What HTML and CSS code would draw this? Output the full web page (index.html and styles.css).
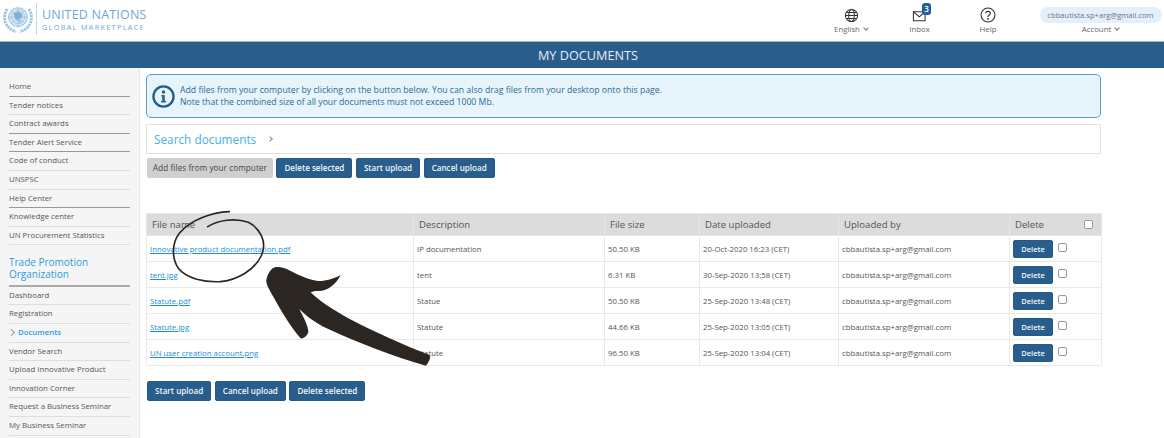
FILE: index.html
```html
<!DOCTYPE html>
<html lang="en">
<head>
<meta charset="utf-8">
<title>My Documents</title>
<link rel="stylesheet" href="styles.css">
</head>
<body>
<header class="top">
  <div class="brand">
    <svg class="emblem" viewBox="0 0 32 32" aria-hidden="true">
      <circle cx="16" cy="14" r="10" fill="#d5e6f5" stroke="#8fbbe0" stroke-width="1"/>
      <g fill="none" stroke="#8fbbe0" stroke-width=".7">
        <circle cx="16" cy="14" r="7"/><circle cx="16" cy="14" r="3.500"/>
        <path d="M6 14h20M16 4v20M9 7l14 14M23 7 9 21"/>
      </g>
      <path d="M11 10l5-2 4 2 1 4-3 1-2 3-3-3zM17 17l2 1-1 3z" fill="#7fb0da"/>
      <g fill="none" stroke="#9cc5e6" stroke-width="3" stroke-dasharray="2.500 .8">
        <path d="M4.500 5.500C-1.500 14 2 26 14 29.500"/><path d="M27.500 5.500c6 8.500 2.500 20.500-9.500 24"/>
      </g>
    </svg>
    <div class="brand-rule"></div>
    <div class="brand-text">
      <div class="brand-un">UNITED NATIONS</div>
      <div class="brand-gm">GLOBAL MARKETPLACE</div>
    </div>
  </div>
  <nav class="tools">
    <div class="tool tool-lang">
      <svg class="ico" viewBox="0 0 16 16" aria-hidden="true"><g fill="none" stroke="#333" stroke-width="1.100"><circle cx="8" cy="8" r="6.500"/><ellipse cx="8" cy="8" rx="3" ry="6.500"/><path d="M1.500 8h13M2.500 4.800h11M2.500 11.200h11"/></g></svg>
      <span>English <i class="chev"></i></span>
    </div>
    <div class="tool tool-inbox">
      <span class="mail">
        <svg class="ico ico-mail" viewBox="0 0 16 14" aria-hidden="true"><g fill="none" stroke="#333" stroke-width="1.100"><path d="M1.500 3h12.500v9.500H1.500z"/><path d="M1.500 3 7.800 8.500 14 3"/></g></svg>
        <b class="badge">3</b>
      </span>
      <span>Inbox</span>
    </div>
    <div class="tool tool-help">
      <svg class="ico ico-help" viewBox="0 0 16 16" aria-hidden="true"><circle cx="8" cy="8" r="7" fill="none" stroke="#333" stroke-width="1.100"/><path d="M5.800 6.300C5.800 3.600 10.300 3.700 10.300 6.300 10.300 8 8 8 8 10" fill="none" stroke="#333" stroke-width="1.200"/><circle cx="8" cy="12" r=".9" fill="#333"/></svg>
      <span>Help</span>
    </div>
    <div class="tool tool-account">
      <span class="pill">cbbautista.sp+arg@gmail.com</span>
      <span>Account <i class="chev"></i></span>
    </div>
  </nav>
</header>
<div class="title-bar">MY DOCUMENTS</div>
<div class="page">
  <aside class="side">
    <ul class="menu">
      <li class="heavy">Home</li>
      <li>Tender notices</li>
      <li class="heavy">Contract awards</li>
      <li class="heavy">Tender Alert Service</li>
      <li>Code of conduct</li>
      <li>UNSPSC</li>
      <li class="heavy">Help Center</li>
      <li>Knowledge center</li>
      <li>UN Procurement Statistics</li>
    </ul>
    <h2 class="org">Trade Promotion Organization</h2>
    <ul class="menu">
      <li>Dashboard</li>
      <li>Registration</li>
      <li class="current">Documents</li>
      <li>Vendor Search</li>
      <li>Upload Innovative Product</li>
      <li>Innovation Corner</li>
      <li>Request a Business Seminar</li>
      <li>My Business Seminar</li>
    </ul>
  </aside>
  <main class="content">
    <div class="notice">
      <svg class="info" viewBox="0 0 24 24" aria-hidden="true"><circle cx="12" cy="12" r="10.500" fill="none" stroke="#1f5f8f" stroke-width="2.400"/><circle cx="12" cy="7.300" r="1.800" fill="#1f5f8f"/><path d="M9.800 10.500h3.500v6.200h1.300v1.500H9.500v-1.500h1.200v-4.700h-.9z" fill="#1f5f8f"/></svg>
      <p>Add files from your computer by clicking on the button below. You can also drag files from your desktop onto this page.<br>Note that the combined size of all your documents must not exceed 1000 Mb.</p>
    </div>
    <div class="search"><span>Search documents</span><i class="chev-r"></i></div>
    <div class="actions">
      <button class="btn btn-grey">Add files from your computer</button>
      <button class="btn">Delete selected</button>
      <button class="btn">Start upload</button>
      <button class="btn">Cancel upload</button>
    </div>
    <table class="docs">
      <colgroup><col class="c1"><col class="c2"><col class="c3"><col class="c4"><col class="c5"><col class="c6"></colgroup>
      <thead>
        <tr><th>File name</th><th>Description</th><th>File size</th><th>Date uploaded</th><th>Uploaded by</th><th><div class="del-head">Delete<i class="box"></i></div></th></tr>
      </thead>
      <tbody>
        <tr><td><a href="#">Innovative product documentation.pdf</a></td><td>IP documentation</td><td>50.50 KB</td><td>20-Oct-2020 16:23 (CET)</td><td>cbbautista.sp+arg@gmail.com</td><td><div class="del-cell"><button class="btn btn-sm">Delete</button><i class="box"></i></div></td></tr>
        <tr><td><a href="#">tent.jpg</a></td><td>tent</td><td>6.31 KB</td><td>30-Sep-2020 13:58 (CET)</td><td>cbbautista.sp+arg@gmail.com</td><td><div class="del-cell"><button class="btn btn-sm">Delete</button><i class="box"></i></div></td></tr>
        <tr><td><a href="#">Statute.pdf</a></td><td>Statue</td><td>50.50 KB</td><td>25-Sep-2020 13:48 (CET)</td><td>cbbautista.sp+arg@gmail.com</td><td><div class="del-cell"><button class="btn btn-sm">Delete</button><i class="box"></i></div></td></tr>
        <tr><td><a href="#">Statute.jpg</a></td><td>Statute</td><td>44.66 KB</td><td>25-Sep-2020 13:05 (CET)</td><td>cbbautista.sp+arg@gmail.com</td><td><div class="del-cell"><button class="btn btn-sm">Delete</button><i class="box"></i></div></td></tr>
        <tr><td><a href="#">UN user creation account.png</a></td><td>Statute</td><td>96.50 KB</td><td>25-Sep-2020 13:04 (CET)</td><td>cbbautista.sp+arg@gmail.com</td><td><div class="del-cell"><button class="btn btn-sm">Delete</button><i class="box"></i></div></td></tr>
      </tbody>
    </table>
    <div class="actions actions-bottom">
      <button class="btn">Start upload</button>
      <button class="btn">Cancel upload</button>
      <button class="btn">Delete selected</button>
    </div>
  </main>
</div>
<svg class="scribble" viewBox="0 0 960 510" aria-hidden="true">
  <path d="M268 20C215 22 150 45 118 85 95 115 95 160 115 190 140 222 195 232 240 230 290 226 345 195 365 150 382 110 360 70 325 52 285 38 235 45 203 65" fill="none" stroke="#2b2622" stroke-width="5" stroke-linecap="round"/>
  <path d="M398 190C412 182 432 188 452 198 480 213 510 225 535 228 560 228 585 220 602 210 590 235 565 258 535 258 525 258 518 259 512 262 535 285 575 312 625 340 705 382 790 420 868 450 874 458 866 472 858 482 760 455 650 412 560 370 530 355 500 335 478 312 490 335 503 360 505 378 505 390 492 402 482 400 455 370 425 320 400 275 388 255 378 238 379 225 382 210 388 198 398 190Z" fill="#2b2622"/>
</svg>
</body>
</html>
```
FILE: styles.css
```css
* { box-sizing: border-box; }
html, body { margin: 0; height: 438px; overflow: hidden; background: #fff; }
body { font-family: "Open Sans", "Liberation Sans", sans-serif; color: #555; position: relative; }

.top { height: 41px; display: flex; justify-content: space-between; }
.brand { display: flex; align-items: flex-start; padding: 3px 0 0 3px; }
.emblem { width: 30px; height: 32px; }
.brand-rule { width: 1px; height: 32px; background: #bcd6ec; margin: 0 5px 0 3px; }
.brand-text { padding-top: 5px; color: #6da7d8; }
.brand-un { font-size: 12.500px; line-height: 14px; letter-spacing: .2px; }
.brand-gm { font-size: 7.300px; line-height: 10px; letter-spacing: 1.300px; }

.tools { display: flex; font-size: 7.800px; color: #666; }
.tool { position: relative; display: flex; flex-direction: column; align-items: center; }
.tool-lang { width: 50px; margin-right: 18.500px; padding-top: 8px; }
.tool-inbox { width: 50px; margin-right: 18.500px; padding-top: 8px; }
.tool-help { width: 50px; margin-right: 30px; padding-top: 7px; }
.tool-account { width: 115px; margin-right: 6px; padding-top: 7px; }
.ico { width: 15px; height: 15px; display: block; }
.ico-help { width: 16px; height: 16px; }
.tool > span:last-child { line-height: 12px; white-space: nowrap; }
.mail { position: relative; display: block; }
.badge { position: absolute; left: 10px; top: -5px; width: 9px; height: 12px; border-radius: 3px; background: #1f5f9a; color: #fff; font-size: 8px; line-height: 12px; text-align: center; font-weight: 600; }
.pill { width: 122px; flex: none; height: 16px; line-height: 16px; text-align: center; background: #e3f0fb; border-radius: 8px; font-size: 7.600px; color: #6a757f; }
.chev { display: inline-block; width: 4px; height: 4px; border-right: 1px solid #777; border-bottom: 1px solid #777; transform: rotate(45deg); margin: 0 0 2px 2px; }

.title-bar { height: 27px; padding-left: 12px; background: #295d8b; border-top: 1px solid #9db4c8; color: #e6eef5; font-size: 12.700px; line-height: 27px; text-align: center; }

.page { display: flex; height: 370px; }
.side { width: 140px; flex: none; background: #f5f5f5; border-right: 1px solid #e9e9e9; padding: 10px 9px 0 9px; }
.menu { list-style: none; margin: 0; padding: 0; font-size: 7.800px; color: #555; }
.menu li { height: 18.600px; line-height: 17px; border-bottom: 1px solid #ddd; white-space: nowrap; }
.menu li.heavy { border-bottom: 1.500px solid #999; }
.menu li.current { color: #2f9bdc; font-weight: 600; padding-left: 9px; position: relative; }
.menu li.current::before { content: ""; position: absolute; left: 0; top: 6px; width: 4px; height: 4px; border-right: 1px solid #999; border-top: 1px solid #999; transform: rotate(45deg); }
.org { margin: 11px 0 0; padding-bottom: 4.500px; font-size: 10px; line-height: 12px; font-weight: 400; color: #2f9bdc; border-bottom: 2px solid #aaa; }

.content { flex: none; width: 955px; margin-left: 6px; padding-top: 6px; }
.notice { height: 44px; display: flex; align-items: center; gap: 5px; padding-left: 5px; background: #e8f4fc; border: 1px solid #5b9dc4; border-radius: 5px; font-size: 8.700px; line-height: 12px; color: #2b6a94; }
.info { width: 23px; height: 23px; flex: none; }
.notice p { margin: 0; }
.search { height: 30px; margin-top: 6px; display: flex; align-items: center; padding-left: 7px; background: #fff; border: 1px solid #e2e2e2; font-size: 11.800px; color: #4ab0e6; }
.chev-r { width: 4px; height: 4px; margin-left: 12px; border-right: 1px solid #888; border-top: 1px solid #888; transform: rotate(45deg); }

.actions { display: flex; gap: 3.500px; margin: 4px 0 0 1px; }
.btn { height: 20px; padding: 0 7px; border: 1px solid #235a8a; border-radius: 2px; background: #295d8b; color: #f2f6fa; font: 600 8.100px/18px "Open Sans", "Liberation Sans", sans-serif; white-space: nowrap; }
.btn-grey { padding: 0 5px; background: #cfcfcf; border-color: #cfcfcf; color: #444; font-weight: 400; letter-spacing: .1px; }
.btn-sm { width: 40px; height: 18px; padding: 0; font-size: 7.500px; line-height: 16px; }
.actions-bottom { margin-top: 15px; }

.docs { width: 955px; margin-top: 35px; border-collapse: collapse; table-layout: fixed; font-size: 7.800px; color: #555; }
.c1 { width: 267px; } .c2 { width: 191px; } .c3 { width: 95px; } .c4 { width: 139px; } .c5 { width: 171px; } .c6 { width: 92px; }
.docs th { height: 22px; padding: 0 5px; background: #dcdcdc; border: 1px solid #e6e6e6; font-size: 9.600px; font-weight: 400; color: #555; text-align: left; }
.docs td { height: 26px; padding: 0 3px; border: 1px solid #e9e9e9; white-space: nowrap; }
.docs a { color: #1c8fd6; }
.del-head { display: flex; justify-content: space-between; align-items: center; padding-right: 3px; }
.del-cell { display: flex; align-items: flex-start; gap: 5px; }
.box { width: 9px; height: 9px; background: #fff; border: 1px solid #999; border-radius: 2px; display: block; }
.del-cell .box { margin-top: 3px; }

.scribble { position: absolute; left: 140px; top: 205px; width: 320px; height: 170px; }
```
